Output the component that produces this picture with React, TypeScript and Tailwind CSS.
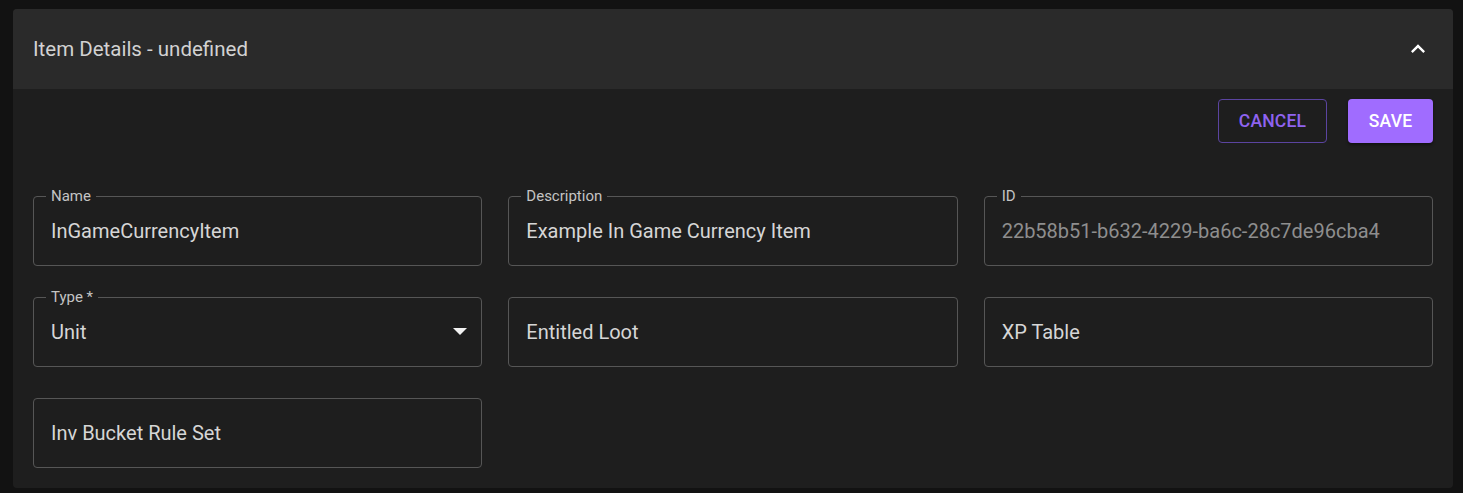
import React from 'react';

interface FieldProps {
  label?: string;
  value: string;
  disabled?: boolean;
  select?: boolean;
}

const Field: React.FC<FieldProps> = ({ label, value, disabled, select }) => {
  return (
    <div className="relative h-[70px] rounded-[4px] border border-[#565656] flex items-center pl-[17px] pr-[16px]">
      {label && (
        <span className="absolute left-[12px] top-[-11px] px-[5px] bg-[#1e1e1e] text-[15px] leading-[20px] text-[#c4c4c4]">
          {label}
        </span>
      )}
      <span className={`flex-1 text-[20px] leading-[24px] ${disabled ? 'text-[#8e8e8e]' : 'text-[#d6d6d6]'}`}>
        {value}
      </span>
      {select && (
        <svg width="14" height="8" viewBox="0 0 14 8" className="-mr-[2px]">
          <path d="M0 0 L14 0 L7 7 Z" fill="#f2f2f2" />
        </svg>
      )}
    </div>
  );
};

export default function App() {
  return (
    <div className="min-h-[493px] bg-[#121212] pt-[9px] pl-[13px] pr-[10px] pb-[5px]" style={{ fontFamily: 'Roboto, "Liberation Sans", sans-serif' }}>
      <div className="rounded-[4px] overflow-hidden bg-[#1e1e1e]">
        {/* Header */}
        <div className="h-[80px] bg-[#2a2a2a] flex items-center justify-between pl-[20px] pr-[21px]">
          <span className="text-[20.5px] text-[#d2d2d2]">Item Details - undefined</span>
          <svg width="28" height="28" viewBox="0 0 24 24">
            <path d="M12 8l-6 6 1.41 1.41L12 10.83l4.59 4.58L18 14z" fill="#ffffff" />
          </svg>
        </div>

        {/* Body */}
        <div className="pt-[10px] px-[20px] pb-[20px]">
          <div className="flex justify-end gap-[21px]">
            <button className="h-[44px] w-[109px] rounded-[4px] border border-[#5b44a0] text-[#8f63f0] font-medium text-[17.5px] tracking-[0.2px]">
              CANCEL
            </button>
            <button className="h-[44px] w-[85px] rounded-[4px] bg-[#a06cff] text-white font-medium text-[17.5px] tracking-[0.2px] shadow-[0_2px_3px_rgba(0,0,0,0.4)]">
              SAVE
            </button>
          </div>

          <div className="grid grid-cols-3 gap-x-[26px] gap-y-[31px] mt-[53px]">
            <Field label="Name" value="InGameCurrencyItem" />
            <Field label="Description" value="Example In Game Currency Item" />
            <Field label="ID" value="22b58b51-b632-4229-ba6c-28c7de96cba4" disabled />
            <Field label="Type *" value="Unit" select />
            <Field value="Entitled Loot" />
            <Field value="XP Table" />
            <Field value="Inv Bucket Rule Set" />
          </div>
        </div>
      </div>
    </div>
  );
}
